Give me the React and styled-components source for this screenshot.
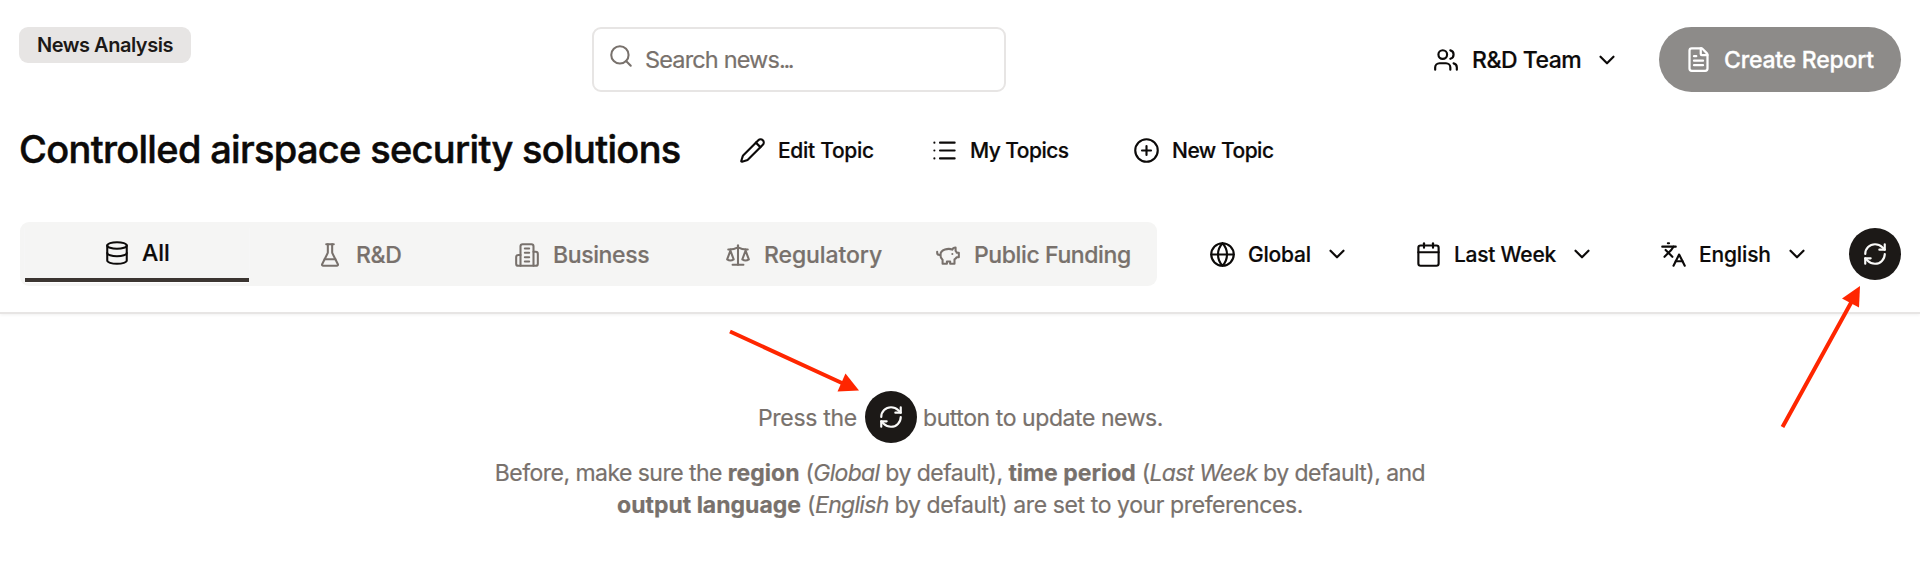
import React from 'react';
import styled, { createGlobalStyle } from 'styled-components';
import {
  Search, Pencil, List, CirclePlus, Users, ChevronDown, FileText, Database,
  Scale, Globe, Calendar, Languages, RefreshCw
} from 'lucide-react';

const Outline = ({ paths }) => (
  <svg width="26" height="26" viewBox="0 0 24 24" fill="none" stroke="currentColor" strokeWidth="1.9" strokeLinecap="round" strokeLinejoin="round">
    {paths.map(d => <path key={d} d={d} />)}
  </svg>
)

const Flask = () => <Outline paths={[
  'M10 2v7.527a2 2 0 0 1-.211.896L4.720 20.550a1 1 0 0 0 .9 1.450h12.760a1 1 0 0 0 .9-1.450l-5.069-10.127A2 2 0 0 1 14 9.527V2',
  'M8.500 2h7',
  'M7 16h10',
]} />

const Building = () => <Outline paths={[
  'M6 22V4a2 2 0 0 1 2-2h8a2 2 0 0 1 2 2v18Z',
  'M6 12H4a2 2 0 0 0-2 2v6a2 2 0 0 0 2 2h2',
  'M18 9h2a2 2 0 0 1 2 2v9a2 2 0 0 1-2 2h-2',
  'M10 6h4',
  'M10 10h4',
  'M10 14h4',
  'M10 18h4',
]} />

const Piggy = () => <Outline paths={[
  'M19 5c-1.500 0-2.800 1.400-3 2-3.500-1.500-11-.3-11 5 0 1.800 0 3 2 4.500V20h4v-2h3v2h4v-4c1-.5 1.700-1 2-2h2v-4h-2c0-1-.5-1.500-1-2V5z',
  'M2 9v1c0 1.100.9 2 2 2h1',
  'M16 11h.01',
]} />

const tabs = [
  { name: 'All', icon: Database, col: 224, pad: 79, gap: 12, ls: 0, active: true },
  { name: 'R&D', icon: Flask, col: 224, pad: 68, gap: 13, ls: -0.4 },
  { name: 'Business', icon: Building, col: 218, pad: 41, gap: 13, ls: -0.38 },
  { name: 'Regulatory', icon: Scale, col: 226, pad: 34, gap: 13, ls: -0.1 },
  { name: 'Public Funding', icon: Piggy, col: 235, pad: 18, gap: 13, ls: -0.4 },
]

const topicLinks = [
  { name: 'Edit Topic', icon: Pencil, w: 192, ls: -0.3 },
  { name: 'My Topics', icon: List, w: 202, ls: -0.55 },
  { name: 'New Topic', icon: CirclePlus, w: 150, ls: -0.5 },
]

const filters = [
  { name: 'Global', icon: Globe, w: 206, textW: 76, ls: -0.2 },
  { name: 'Last Week', icon: Calendar, w: 245, textW: 115, ls: -0.25 },
  { name: 'English', icon: Languages, w: 189, textW: 85, ls: -0.15 },
]

const App = () => {
  return (
    <Page>
      <GlobalStyle />
      <Header>
        <TopRow>
          <Badge>News Analysis</Badge>
          <SearchBox>
            <Search size={26} strokeWidth={1.9} />
            <Placeholder>Search news<span>...</span></Placeholder>
          </SearchBox>
          <Team>
            <Users size={26} />
            <TeamName>R&amp;D Team</TeamName>
            <ChevronDown size={26} />
          </Team>
          <ReportButton>
            <FileText size={27} />
            <span>Create Report</span>
          </ReportButton>
        </TopRow>

        <TitleRow>
          <Title>Controlled airspace security solutions</Title>
          {topicLinks.map(link => (
            <TopicLink key={link.name} $w={link.w} $ls={link.ls}>
              <link.icon size={27} strokeWidth={1.9} />
              <span>{link.name}</span>
            </TopicLink>
          ))}
        </TitleRow>

        <FilterRow>
          <Tabs>
            {tabs.map(tab => (
              <Tab key={tab.name} $col={tab.col} $pad={tab.pad} $gap={tab.gap} $active={tab.active} $ls={tab.ls}>
                <tab.icon size={26} strokeWidth={1.9} />
                <span>{tab.name}</span>
              </Tab>
            ))}
          </Tabs>
          <Filters>
            {filters.map(filter => (
              <Filter key={filter.name} $w={filter.w} $textW={filter.textW} $ls={filter.ls}>
                <filter.icon size={27} strokeWidth={1.9} />
                <span>{filter.name}</span>
                <ChevronDown size={26} />
              </Filter>
            ))}
          </Filters>
          <Refresh><RefreshCw size={26} /></Refresh>
        </FilterRow>
      </Header>

      <Empty>
        <Hint>
          <HintStart>Press the</HintStart>
          <Refresh><RefreshCw size={26} /></Refresh>
          <HintEnd>button to update news.</HintEnd>
        </Hint>
        <Line $ls={-0.54}>
          Before, make sure the <b>region</b> (<i>Global</i> by default), <b>time period</b> (<i>Last Week</i> by default), and
        </Line>
        <Line $ls={-0.4}>
          <b>output language</b> (<i>English</i> by default) are set to your preferences.
        </Line>
      </Empty>

      {/* arrows pointing at both refresh buttons */}
      <Arrows viewBox="0 0 1920 584">
        <path d="M730 331.500L843 383.500M1782.500 427L1852 301" />
        <polygon points="859,390.500 845.500,373.500 837.500,391.500" />
        <polygon points="1860,286 1842,298.500 1859,307.500" />
      </Arrows>
    </Page>
  )
}

const GlobalStyle = createGlobalStyle`
  * { box-sizing: border-box; }
  body {
    margin: 0;
    background: #fff;
    overflow: hidden;
  }
`
const Page = styled.div`
  position: relative;
  width: 1920px;
  height: 584px;
  font-family: Inter, "Liberation Sans", sans-serif;
  color: #0c0a09;
  white-space: nowrap;
  -webkit-text-stroke: 0.2px currentColor;
  svg { flex-shrink: 0; }
`
const Header = styled.header`
  height: 314px;
  padding: 27px 19px 0;
  border-bottom: 2px solid #e7e5e4;
  box-shadow: 0 1px 3px rgba(0, 0, 0, 0.06);
`
const TopRow = styled.div`
  display: flex;
  height: 65px;
`
const Badge = styled.div`
  width: 172px;
  height: 36px;
  border-radius: 9px;
  background: #e7e5e4;
  color: #1c1917;
  font-size: 20px;
  font-weight: 600;
  line-height: 36px;
  padding-left: 18px;
  letter-spacing: -0.48px;
  -webkit-text-stroke: 0;
`
const SearchBox = styled.div`
  display: flex;
  width: 414px;
  margin-left: 401px;
  border: 2px solid #e7e5e4;
  border-radius: 9px;
  color: #78716c;
  padding: 14px 0 0 14px;
`
const Placeholder = styled.span`
  margin-left: 11px;
  font-size: 23.500px;
  line-height: 34px;
  letter-spacing: -0.85px;
  span { letter-spacing: -2.400px; }
`
const Team = styled.div`
  display: flex;
  align-items: center;
  margin-left: 427px;
  width: 226px;
`
const TeamName = styled.span`
  width: 122px;
  margin-left: 13px;
  font-size: 23px;
  font-weight: 500;
  letter-spacing: -0.48px;
`
const ReportButton = styled.button`
  display: flex;
  align-items: center;
  width: 242px;
  padding: 0 0 0 26px;
  border: none;
  border-radius: 33px;
  background: #8d8b89;
  color: #fff;
  font: 500 23px Inter, sans-serif;
  letter-spacing: -0.22px;
  -webkit-text-stroke: 0.3px currentColor;
  span { margin-left: 12px; }
`
const TitleRow = styled.div`
  display: flex;
  align-items: center;
  height: 60px;
  margin-top: 28px;
`
const Title = styled.h1`
  width: 720px;
  margin: 0;
  font-size: 38px;
  font-weight: 500;
  letter-spacing: -0.68px;
  line-height: 58px;
  padding-bottom: 2px;
  -webkit-text-stroke: 0.5px currentColor;
`
const TopicLink = styled.div`
  display: flex;
  align-items: center;
  gap: 12px;
  width: ${props => props.$w}px;
  font-size: 21px;
  font-weight: 500;
  letter-spacing: ${props => props.$ls}px;
`
const FilterRow = styled.div`
  display: flex;
  align-items: center;
  height: 64px;
  margin-top: 42px;
`
const Tabs = styled.div`
  display: flex;
  width: 1137px;
  height: 64px;
  margin-left: 1px;
  padding: 5px 5px 4px;
  border-radius: 9px;
  background: #f5f5f4;
`
const Tab = styled.div`
  display: flex;
  align-items: center;
  gap: ${props => props.$gap}px;
  width: ${props => props.$col}px;
  padding-left: ${props => props.$pad}px;
  font-size: 23px;
  font-weight: 500;
  letter-spacing: ${props => props.$ls}px;
  color: ${props => props.$active ? '#0c0a09' : '#78716c'};
  border-bottom: ${props => props.$active ? '4px solid #3b3531' : 'none'};
  box-shadow: ${props => props.$active ? '0 1px 1px #fff' : 'none'};
`
const Filters = styled.div`
  display: flex;
  margin-left: 52px;
`
const Filter = styled.div`
  display: flex;
  align-items: center;
  width: ${props => props.$w}px;
  font-size: 21px;
  font-weight: 500;
  letter-spacing: ${props => props.$ls}px;
  span {
    width: ${props => props.$textW}px;
    margin-left: 12px;
  }
`
const Refresh = styled.div`
  display: flex;
  flex-shrink: 0;
  align-items: center;
  justify-content: center;
  width: 52px;
  height: 52px;
  border-radius: 50%;
  background: #1c1917;
  color: #fafaf9;
`
const Empty = styled.main`
  display: flex;
  flex-direction: column;
  align-items: center;
  padding-top: 77px;
  color: #78716c;
  font-size: 23px;
  b { letter-spacing: 0; }
`
const Hint = styled.div`
  display: flex;
  align-items: center;
  width: 404px;
  margin-bottom: 14px;
  line-height: 32px;
`
const HintStart = styled.span`
  flex-shrink: 0;
  width: 107px;
  padding-top: 1px;
  letter-spacing: -0.32px;
`
const HintEnd = styled.span`
  margin-left: 6px;
  padding-top: 1px;
  letter-spacing: -0.43px;
`
const Line = styled.p`
  margin: 0;
  line-height: 32px;
  letter-spacing: ${props => props.$ls}px;
  i { letter-spacing: -0.7px; }
`
const Arrows = styled.svg`
  position: absolute;
  inset: 0;
  pointer-events: none;
  path { stroke: #ff2600; stroke-width: 4; }
  polygon { fill: #ff2600; }
`
export default App;
